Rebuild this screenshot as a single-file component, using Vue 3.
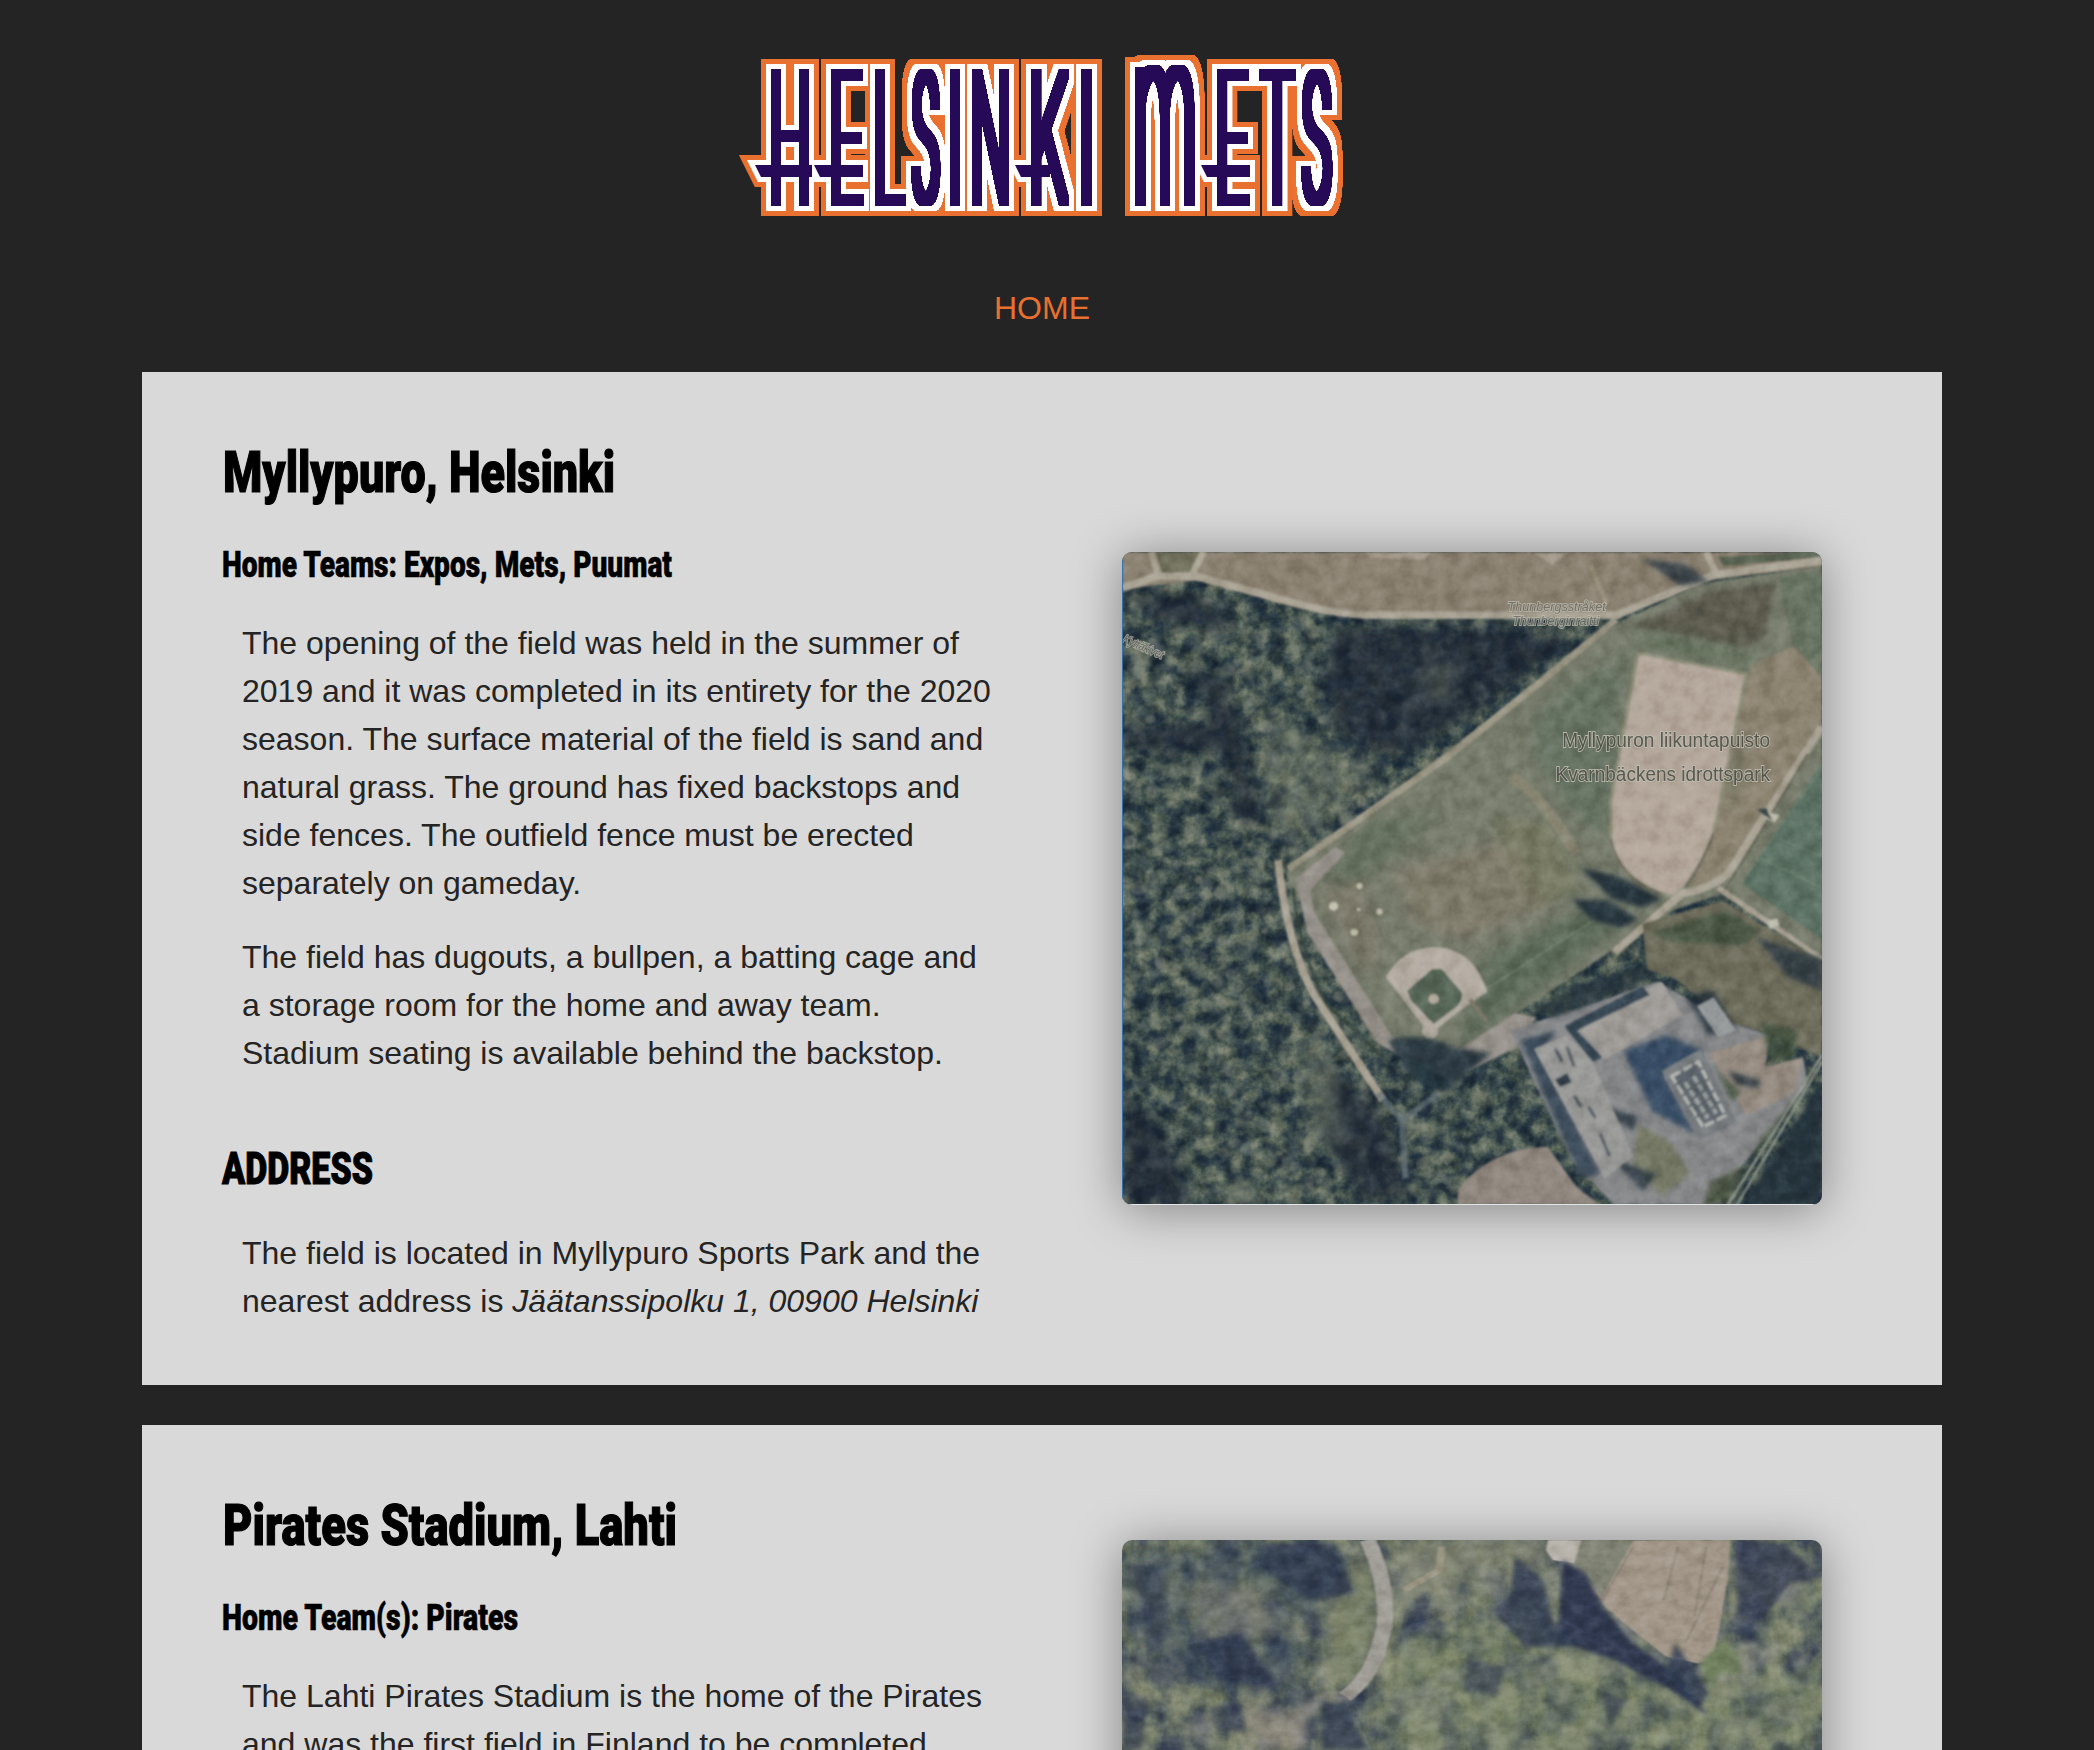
<script setup>
// Ink box (left, right, top) of each wordmark letter, in wordmark pixels
const BOTTOM = 206
const STEM = 9
const glyphs = [
  ['H', 770.7, 809, 68], ['E', 830.7, 864, 68], ['L', 874.7, 906, 68], ['S', 911, 941, 68],
  ['I', 949.7, 960.5, 68], ['N', 972, 1009, 68], ['K', 1031, 1070, 68], ['I', 1081, 1092, 68],
  ['m', 1135, 1195, 64], ['E', 1217, 1250, 68], ['T', 1259, 1296, 68], ['S', 1301, 1333, 68],
]
const ctx = document.createElement('canvas').getContext('2d')
ctx.font = '100 200px Inter, sans-serif'
// Fit every letter's ink to its box, leaving room for the dilation that thickens it
const letters = glyphs.map(([ch, l, r, top]) => {
  const m = ctx.measureText(ch)
  const h = STEM / 2
  const inkW = m.actualBoundingBoxRight + m.actualBoundingBoxLeft
  const inkH = m.actualBoundingBoxAscent + m.actualBoundingBoxDescent
  const sx = Math.max(0.12, (r - l - STEM) / inkW)
  const sy = (BOTTOM - top - STEM) / inkH
  const x = (l + r) / 2 - (inkW * sx) / 2 + m.actualBoundingBoxLeft * sx
  const y = BOTTOM - h - m.actualBoundingBoxDescent * sy
  return { ch, t: `translate(${x} ${y}) scale(${sx} ${sy})` }
})
const swashes = ['755,165 812,165 812,177 761,177', '814,165 863,165 863,177 820,177', '1015,165 1050,165 1050,177 1021,177', '1201,165 1250,165 1250,177 1207,177']

// Tree crowns scattered over the woods of both aerial views
let seed = 11
const rnd = () => (seed = (seed * 16807) % 2147483647) / 2147483647
const shades = ['#7a8378', '#687369', '#868a7d', '#55635d', '#8e8d80']
const crowns = Array.from({ length: 1200 }, () => ({
  x: 48 + rnd() * 720, y: 140 + rnd() * 1370, r: 4 + rnd() * 12, c: shades[Math.floor(rnd() * 5)], o: 0.1 + rnd() * 0.3,
}))
const crowns2 = Array.from({ length: 560 }, () => {
  const x = 48 + rnd() * 1482
  return { x, y: 120 + rnd() * 640, r: 8 + rnd() * 26, c: ['#8f957f', '#888b82', '#98988c', '#757f6c', '#a2a394'][Math.floor(rnd() * 5)], o: x > 620 ? 0.12 + rnd() * 0.35 : 0.05 + rnd() * 0.24 }
})
</script>

<template>
  <div class="page">
    <header>
      <svg class="wordmark" viewBox="742 50 600 170" width="600" height="170" role="img" aria-label="Helsinki Mets">
        <defs>
          <!-- the alpha boost turns thin anti-aliased stems solid once widened -->
          <filter v-for="r in [14, 9, 4]" :id="`fat${r}`" :key="r" filterUnits="userSpaceOnUse" x="730" y="30" width="640" height="210" color-interpolation-filters="sRGB">
            <feComponentTransfer><feFuncA type="linear" slope="3.5" /></feComponentTransfer>
            <feMorphology operator="dilate" :radius="`${r} ${r}`" />
            <feComponentTransfer><feFuncA type="linear" slope="2.2" /></feComponentTransfer>
          </filter>
        </defs>
        <g v-for="layer in [['edge', 14], ['rim', 9], ['core', 4]]" :key="layer[0]" :class="layer[0]">
          <g :filter="`url(#fat${layer[1]})`">
            <text v-for="(g, i) in letters" :key="i" :transform="g.t" :aria-hidden="layer[0] !== 'core'">{{ g.ch }}</text>
          </g>
          <polygon v-for="s in swashes" :key="s" :points="s" />
        </g>
      </svg>
      <nav><a>HOME</a></nav>
    </header>

    <main>
      <section class="field">
        <div class="info">
          <h1><svg width="460" height="60"><text x="1" y="50" textLength="392" lengthAdjust="spacingAndGlyphs">Myllypuro, Helsinki</text></svg></h1>
          <h3><svg width="520" height="40"><text x="0" y="30" textLength="450" lengthAdjust="spacingAndGlyphs">Home Teams: Expos, Mets, Puumat</text></svg></h3>
          <p>The opening of the field was held in the summer of 2019 and it was completed in its entirety for the 2020 season. The surface material of the field is sand and natural grass. The ground has fixed backstops and side fences. The outfield fence must be erected separately on gameday.</p>
          <p>The field has dugouts, a bullpen, a batting cage and a storage room for the home and away team. Stadium seating is available behind the backstop.</p>
          <h2><svg width="300" height="44"><text x="0" y="37" textLength="151" lengthAdjust="spacingAndGlyphs">ADDRESS</text></svg></h2>
          <p>The field is located in Myllypuro Sports Park and the nearest address is <em>Jäätanssipolku 1, 00900 Helsinki</em></p>
        </div>

        <svg class="map" viewBox="48 49 1482 1461" preserveAspectRatio="none">
          <defs>
            <filter id="canopy" x="0" y="0" width="100%" height="100%" color-interpolation-filters="sRGB">
              <feTurbulence type="fractalNoise" baseFrequency="0.028" numOctaves="4" seed="4" />
              <feColorMatrix values="1 0 0 0 0  1 0 0 0 0  1 0 0 0 0  0 0 0 0 1" />
              <feComponentTransfer>
                <feFuncR type="table" tableValues=".11 .11 .12 .17 .25 .35 .45 .52 .56" />
                <feFuncG type="table" tableValues=".16 .16 .18 .23 .31 .40 .48 .54 .57" />
                <feFuncB type="table" tableValues=".22 .22 .23 .26 .30 .36 .42 .48 .5" />
              </feComponentTransfer>
            </filter>
            <filter id="grain" x="0" y="0" width="100%" height="100%" color-interpolation-filters="sRGB">
              <feTurbulence type="fractalNoise" baseFrequency="0.03" numOctaves="5" seed="9" />
              <feColorMatrix values="1.6 0 0 0 -.3  1.6 0 0 0 -.3  1.6 0 0 0 -.3  0 0 0 0 1" />
            </filter>
            <filter id="soft"><feGaussianBlur stdDeviation="2" /></filter>
            <filter id="hazy" x="-30%" y="-30%" width="160%" height="160%"><feGaussianBlur stdDeviation="16" /></filter>
            <filter id="shade" x="-30%" y="-30%" width="160%" height="160%"><feGaussianBlur stdDeviation="6" /></filter>
            <clipPath id="grass"><path d="M420 780 L1080 215 L1530 90 V950 L1320 810 L1215 850 L760 1165 L620 1150 L450 900Z" /></clipPath>
          </defs>
          <rect x="48" y="49" width="1482" height="1461" filter="url(#canopy)" />
          <g filter="url(#soft)">
            <circle v-for="(c, i) in crowns" :key="i" :cx="c.x" :cy="c.y" :r="c.r" :fill="c.c" :opacity="c.o" />
          </g>
          <g fill="#1c2834" opacity=".75" filter="url(#hazy)">
            <path d="M500 220 L800 215 L1010 240 L810 400 L640 510 L510 460 L470 340Z" />
            <path d="M170 290 L260 330 L310 480 L350 660 L290 650 L270 500 L60 490 V440 L250 430Z" />
            <path d="M50 1250 L140 1350 L200 1510 H50Z" />
            <path d="M470 1190 L590 1290 L660 1500 H560 L480 1370Z" />
            <path d="M60 140 L220 150 L300 220 L120 210Z" />
          </g>
          <g fill="#7b8270" opacity=".4" filter="url(#hazy)">
            <path d="M350 400 L470 480 L600 540 L400 720 L360 600Z" />
            <path d="M680 300 L740 290 L750 380 L690 390Z" />
            <path d="M420 1110 L500 1200 L530 1380 L440 1350Z M270 1440 L390 1510 H250Z" />
          </g>
          <g filter="url(#soft)">
            <!-- meadow and playing fields -->
            <path d="M48 49 H1530 V80 L1290 110 L1100 185 H560 L400 165 L220 110 L48 132Z" fill="#8b8171" />
            <path d="M120 49 H215 L195 98 L135 100Z" fill="#6f6f5b" />
            <path d="M565 49 H700 L690 66 L575 62Z M920 52 H990 L960 78Z" fill="#a59b8d" />
            <path d="M395 770 L1085 215 L1270 120 L1530 80 V960 L1320 812 L1215 850 L870 1090 L760 1170 L620 1160 L455 880Z" fill="#777b6c" />
            <path d="M1440 105 L1530 90 V325 L1470 270Z" fill="#6a7463" />
            <path d="M1380 300 L1470 260 L1530 330 V430 L1330 770 L1250 805 L1300 640Z" fill="#8c8371" />
            <path d="M1310 60 L1480 49 H1530 V62 L1320 80Z" fill="#5c6655" />
          </g>
          <path d="M1130 215 L1290 135 L1430 120 L1410 235 L1370 262Z" fill="#5d5c50" filter="url(#shade)" />
          <g filter="url(#hazy)" clip-path="url(#grass)" opacity=".75">
            <path d="M930 400 L1110 280 L1070 690 L990 620 L920 500Z" fill="#627160" />
            <path d="M560 660 L720 640 L580 760 L450 830Z" fill="#5e6c5a" />
            <path d="M620 760 L900 680 L960 840 L770 920 L660 880Z" fill="#827c6c" />
            <path d="M820 960 L1060 830 L1110 880 L860 1080 L760 1160Z" fill="#566757" />
            <path d="M460 800 L560 780 L600 950 L560 1000Z" fill="#7b7767" />
            <path d="M840 640 L960 660 L1010 800 L920 840Z" fill="#797a61" />
            <path d="M1120 255 L1390 305 L1400 280 L1180 230Z M1330 560 L1370 430 L1340 640Z" fill="#5f6f59" />
          </g>
          <g filter="url(#soft)">
            <path d="M1140 275 L1370 322 L1300 680 Q1260 790 1215 820 Q1100 790 1083 690 L1082 610Z" fill="#b3a69a" stroke="#8b8d78" stroke-width="7" />
            <path d="M1082 690 Q1100 780 1190 815 M1300 680 Q1280 740 1240 800" fill="none" stroke="#6d6b5d" stroke-width="5" />
            <path d="M1530 520 L1360 790 L1530 915Z" fill="#5d7365" />
            <path d="M1440 690 L1530 730 M1400 735 L1530 800 M1510 560 L1360 790" stroke="#788b78" stroke-width="2" fill="none" />
            <path d="M870 550 Q935 590 1010 725" stroke="#8b8773" stroke-width="24" fill="none" opacity=".8" />
            <!-- roads -->
            <g fill="none" stroke="#a9a394" stroke-linejoin="round">
              <path d="M48 130 L120 103 L205 103 L360 148 Q490 190 580 190 L1095 190 L1300 100 L1530 68" stroke-width="17" />
              <path d="M110 49 L124 100 M220 49 L196 100 M1285 49 L1305 95" stroke-width="14" />
              <path d="M1095 200 L910 360 L740 505 L400 758" stroke-width="15" stroke="#9a9584" />
              <path d="M378 738 Q398 930 455 1040 L600 1275" stroke-width="17" />
              <path d="M1040 80 L1075 165" stroke-width="9" stroke="#9a907c" />
              <path d="M1530 440 L1330 770 Q1290 805 1235 812 L1090 945" stroke-width="17" />
              <path d="M1310 800 L1530 960" stroke-width="12" />
              <path d="M1500 500 L1325 805" stroke="#626555" stroke-width="4" />
              <path d="M590 1260 L640 1320 L720 1260 M640 1310 L648 1450" stroke="#65717a" stroke-width="13" opacity=".65" />
            </g>
            <path d="M520 722 L500 708 L415 780 L440 900 L590 1150 L740 1230 L880 1160 L925 1090 L880 1080 L765 1160 L630 1150 L455 855 L447 805Z" fill="#96918a" />
            <path d="M410 800 Q420 930 480 1060 L610 1190" stroke="#38463e" stroke-width="6" fill="none" />
            <path d="M1150 880 L1320 830 L1530 965 V1180 L1430 1130 L1330 1100 L1215 1000 L1160 985Z" fill="#6e6d5b" />
            <path d="M760 1475 Q830 1380 950 1380 L1010 1470 L1060 1510 H760Z" fill="#90877f" />
            <path d="M870 1120 L1180 1010 L1330 1100 L1420 1130 L1410 1200 L1490 1180 L1500 1240 L1340 1450 L1280 1510 H1090 L1000 1410Z" fill="#87888a" />
            <path d="M1290 1170 L1420 1130 L1410 1200 L1490 1180 L1470 1260 L1370 1310Z" fill="#958b81" />
          </g>
          <g filter="url(#shade)">
            <path d="M1170 900 L1330 850 L1400 900 L1360 930 L1200 920Z M1400 1100 L1480 1120 L1470 1180 L1420 1190Z M1300 1200 L1360 1260 L1340 1280Z" fill="#41513f" opacity=".8" />
            <path d="M1140 1330 L1210 1370 L1250 1440 L1190 1490 L1130 1420Z" fill="#74785f" opacity=".9" />
            <path d="M1490 1250 L1400 1360 L1330 1500 L1280 1510 L1290 1460 L1370 1420Z" fill="#47513f" opacity=".8" />
          </g>
          <!-- diamond -->
          <g filter="url(#soft)">
            <path d="M607 1000 Q640 935 710 933 Q790 935 820 1028 L700 1128Z" fill="#b3aba1" />
            <path d="M652 1030 L705 982 L725 982 L768 1035 Q770 1060 745 1075 L708 1105 L660 1052Z" fill="#586759" />
            <path d="M610 1000 L700 1118 L820 1030" fill="none" stroke="#aca79c" stroke-width="6" />
            <circle cx="700" cy="1122" r="17" fill="#aca59b" /><circle cx="708" cy="1049" r="11" fill="#b5ab9f" />
            <g fill="#c3c1af"><circle cx="496" cy="841" r="10" /><circle cx="551" cy="796" r="7" /><circle cx="593" cy="854" r="7" /><circle cx="540" cy="900" r="8" /><circle cx="549" cy="849" r="4" /></g>
            <path d="M820 1026 L1080 850" stroke="#829078" stroke-width="2" />
            <path d="M785 1050 L820 1100" stroke="#7d7767" stroke-width="9" />
          </g>
          <!-- shadows -->
          <g fill="#26343e" filter="url(#shade)">
            <path d="M610 1140 Q680 1120 760 1160 L830 1170 L730 1260 L660 1230Z" opacity=".9" />
            <path d="M1018 755 L1100 775 L1190 825 L1150 845 L1085 825Z" />
            <path d="M1000 825 L1080 830 L1140 870 L1105 890 L1040 870Z" />
            <path d="M1150 65 L1240 75 L1290 115 L1230 125Z" opacity=".8" />
            <path d="M1390 910 L1530 960 V1030 L1460 1000Z" opacity=".8" />
            <path d="M1360 1510 L1530 1230 V1510Z" />
            <path d="M915 1080 L1000 1020 L1150 975 L1180 1000 L970 1090Z" opacity=".75" />
            <path d="M1240 1040 L1300 1030 L1350 1120 L1290 1130Z" opacity=".8" />
            <path d="M890 1140 L970 1120 L930 1170 L1060 1440 L1020 1450Z" fill="#3c4d5c" />
            <path d="M1110 1165 L1200 1130 L1280 1165 L1195 1220 L1260 1350 L1170 1300Z" fill="#374e65" />
            <path d="M1060 1290 L1140 1310 L1130 1345Z M1330 1210 L1400 1230 L1395 1250 L1350 1240Z M1090 1410 L1180 1440 L1150 1480Z" opacity=".8" />
          </g>
          <!-- school buildings -->
          <g filter="url(#soft)">
            <path d="M1010 1110 L1190 1010 L1235 1085 L1070 1185Z" fill="#9e9b97" />
            <path d="M985 1110 L1150 1020 L1165 1040 L1010 1120 L1065 1180 L1045 1190Z" fill="#394854" />
            <path d="M920 1160 L990 1130 L1045 1190 L1130 1400 L1070 1450Z" fill="#999997" />
            <path d="M1265 1065 L1300 1045 L1350 1120 L1310 1135Z" fill="#949898" />
            <path d="M1190 1210 L1275 1160 L1350 1325 L1270 1365Z" fill="#777c7f" />
            <path d="M1212 1222 L1268 1190 L1325 1310 L1278 1335Z" fill="#5b646a" stroke="#b3b5b1" stroke-width="7" stroke-dasharray="22 6" />
            <path d="M1240 1235 L1288 1315 M1258 1222 L1306 1305" stroke="#9b9f9e" stroke-width="9" stroke-dasharray="16 5" />
            <path d="M965 1160 L980 1190 M990 1155 L1005 1200 M1005 1265 L1020 1290 M1035 1290 L1050 1315 M1060 1350 L1080 1400" stroke="#596269" stroke-width="7" />
            <path d="M965 1230 L990 1215 L1000 1235 L975 1245Z" fill="#36434d" />
            <path d="M1530 1175 L1330 1510 M1530 1190 L1350 1510" stroke="#8e9387" stroke-width="5" />
            <path d="M1415 630 L1440 638 L1430 655 L1412 645Z M1415 875 L1435 868 L1440 885 L1420 892Z" fill="#bdbcae" />
            <path d="M1392 625 L1412 622 L1425 650Z" fill="#303c3c" />
          </g>
          <rect class="overlay" x="48" y="49" width="1482" height="1461" filter="url(#grain)" />
          <g class="places">
            <text x="980" y="485" font-size="47" textLength="440" lengthAdjust="spacingAndGlyphs">Myllypuron liikuntapuisto</text>
            <text x="966" y="562" font-size="47" textLength="454" lengthAdjust="spacingAndGlyphs">Kvarnbäckens idrottspark</text>
            <g class="street">
              <text x="864" y="181" font-size="29" textLength="208" lengthAdjust="spacingAndGlyphs">Thunbergsstråket</text>
              <text x="874" y="212" font-size="29" textLength="184" lengthAdjust="spacingAndGlyphs">Thunberginraitti</text>
              <text x="48" y="250" font-size="27" textLength="92" lengthAdjust="spacingAndGlyphs" transform="rotate(25 48 250)">Kyttäkivet</text>
            </g>
          </g>
          <path d="M49 60 V1500" stroke="#3473b5" stroke-width="2" />
          <path d="M60 1509 H1520" stroke="#e4e7e8" stroke-width="2.4" />
        </svg>
      </section>

      <section class="field second">
        <div class="info">
          <h1><svg width="520" height="60"><text x="1" y="50" textLength="454" lengthAdjust="spacingAndGlyphs">Pirates Stadium, Lahti</text></svg></h1>
          <h3><svg width="520" height="40"><text x="0" y="30" textLength="296" lengthAdjust="spacingAndGlyphs">Home Team(s): Pirates</text></svg></h3>
          <p>The Lahti Pirates Stadium is the home of the Pirates<br />and was the first field in Finland to be completed</p>
        </div>
        <svg class="map" viewBox="48 120 1482 1959" preserveAspectRatio="none">
          <defs>
            <filter id="woods" x="0" y="0" width="100%" height="100%" color-interpolation-filters="sRGB">
              <feTurbulence type="fractalNoise" baseFrequency="0.017 0.009" numOctaves="5" seed="23" />
              <feColorMatrix values="1 0 0 0 0  1 0 0 0 0  1 0 0 0 0  0 0 0 0 1" />
              <feComponentTransfer>
                <feFuncR type="table" tableValues=".20 .20 .22 .28 .37 .46 .54 .60 .64" />
                <feFuncG type="table" tableValues=".24 .24 .26 .32 .41 .49 .56 .61 .64" />
                <feFuncB type="table" tableValues=".33 .33 .33 .35 .38 .41 .46 .51 .55" />
              </feComponentTransfer>
            </filter>
          </defs>
          <rect x="48" y="120" width="1482" height="900" filter="url(#woods)" />
          <g filter="url(#shade)">
            <ellipse v-for="(c, i) in crowns2" :key="i" :cx="c.x" :cy="c.y" :rx="c.r" :ry="c.r * 1.4" :fill="c.c" :opacity="c.o" />
          </g>
          <g filter="url(#hazy)">
            <path d="M620 420 L860 330 L1000 460 L1130 420 L1240 560 L1530 500 V760 H600Z" fill="#7e8c66" opacity=".3" />
            <path d="M480 330 L570 130 L600 420 L510 570 L480 470Z" fill="#7f876b" opacity=".8" />
            <path d="M48 180 L320 120 L540 160 L520 280 L400 350 L470 470 L360 600 L190 540 L60 400Z" fill="#2f3950" opacity=".35" />
            <path d="M640 120 H950 V220 L850 180 L660 300Z" fill="#828572" opacity=".7" />
            <path d="M300 620 L440 640 L430 750 H330Z" fill="#938c80" opacity=".7" />
            <path d="M200 260 L330 270 L380 400 L230 420Z" fill="#85857a" opacity=".6" />
          </g>
          <g filter="url(#soft)">
            <path d="M1020 120 H1335 L1330 240 L1300 480 L1265 490 L1200 470 L1120 380 L1070 320 L1000 190Z" fill="#a19688" />
            <path d="M1020 120 H1130 L1065 290 L1000 190Z" fill="#818474" />
            <path d="M950 120 H1020 L1005 190 L960 180 L945 150Z" fill="#b8b3ab" />
            <path d="M1130 140 L1065 300 M1225 140 L1195 300 M1320 200 L1240 430 M1285 140 L1260 350" stroke="#837b70" stroke-width="3" fill="none" />
            <path d="M568 120 Q612 250 604 380 L590 450 Q570 540 520 590" fill="none" stroke="#a19e98" stroke-width="34" />
            <path d="M725 140 L720 210 L645 270" fill="none" stroke="#aaa08d" stroke-width="16" opacity=".6" />
          </g>
          <path d="M540 590 L480 590 L420 650 V750" fill="none" stroke="#938f87" stroke-width="32" opacity=".6" filter="url(#shade)" />
          <g fill="#303b51" filter="url(#shade)">
            <path d="M980 180 L1030 220 L1070 330 L1130 430 L1230 530 L1290 650 L1210 570 L1090 480 L970 420Z" />
            <path d="M880 170 L940 240 L960 360 L1010 440 L900 440 L830 330 L870 290Z" opacity=".8" />
            <path d="M350 130 L500 130 L540 280 L440 300 L340 200Z" opacity=".8" />
            <path d="M200 430 L300 400 L380 570 L250 540Z" opacity=".9" />
            <path d="M470 600 L520 620 L570 750 H470Z" opacity=".8" />
            <path d="M1350 120 L1450 130 L1530 230 L1460 250 L1400 370 L1350 340Z" opacity=".75" />
            <path d="M1220 430 L1290 580 L1270 620 L1200 520Z" opacity=".8" />
            <path d="M60 190 L130 200 L150 400 L100 480 L90 300Z M780 480 L860 500 L840 590 L770 570Z M1060 570 L1120 600 L1080 680Z M50 560 L100 600 L90 750 H50Z M230 620 L300 610 L310 700 L250 690Z" opacity=".6" />
          </g>
          <path d="M1270 490 L1320 420 L1350 460 L1355 520 L1310 520 L1300 580Z" fill="#71815f" filter="url(#shade)" />
          <rect class="overlay" x="48" y="120" width="1482" height="900" filter="url(#grain)" />
        </svg>
      </section>
    </main>
  </div>
</template>

<style>
body { margin: 0; background: #242424; }
</style>

<style scoped>
.page { height: 1750px; overflow: hidden; padding-right: 10px; background: #242424; font-family: "Liberation Sans", Arial, sans-serif; font-size: 32px; line-height: 48px; color: #242424; }
header { display: flex; flex-direction: column; align-items: center; padding-top: 50px; height: 322px; }
header nav { margin-top: 64px; color: #ea702f; }
.wordmark { overflow: visible; display: block; flex: none; }
.wordmark text { font: 100 200px Inter, sans-serif; stroke: none; }
.wordmark polygon { stroke-miterlimit: 3; }
.edge { fill: #e97130; stroke: #e97130; }
.rim { fill: #fff; stroke: #fff; }
.core { fill: #260a58; stroke: #260a58; }
.edge polygon { stroke-width: 20px; }
.rim polygon { stroke-width: 10px; }
.core polygon { stroke-width: 0; }
main { display: flex; flex-direction: column; align-items: center; gap: 40px; }
.field { box-sizing: border-box; width: 1800px; height: 1013px; flex: none; padding: 0 120px 0 80px; display: flex; justify-content: space-between; align-items: center; background: #d9d9d9; }
.second { height: 883px; }
.info { align-self: flex-start; width: 780px; padding-top: 70px; }
h1, h2, h3, p { margin: 0; }
h1 svg, h2 svg, h3 svg { display: block; overflow: visible; }
h1 text, h2 text, h3 text { font-family: Roboto, sans-serif; font-weight: 900; fill: #000; stroke: #000; stroke-width: 1.2px; }
h1 { height: 105px; }
h1 text { font-size: 56.5px; }
h3 { height: 72px; }
h3 text { font-size: 36px; stroke-width: 0.6px; }
h2 { height: 82px; margin-top: 70px; }
h2 text { font-size: 44.5px; stroke-width: 1px; }
p { width: 758px; padding-left: 20px; }
p + p { margin-top: 26px; }
.map { display: block; flex: none; width: 700px; height: 653px; border-radius: 10px; box-shadow: 0 4px 50px rgba(0, 0, 0, 0.4); }
.overlay { opacity: 0.24; mix-blend-mode: soft-light; }
.places text { font-family: "Liberation Sans", Arial, sans-serif; fill: #4f5249; stroke: #bfbcb0; stroke-width: 4px; paint-order: stroke; opacity: 0.9; }
.places .street text { font-style: italic; fill: #6a6c63; stroke-width: 4px; opacity: 0.75; }
</style>
